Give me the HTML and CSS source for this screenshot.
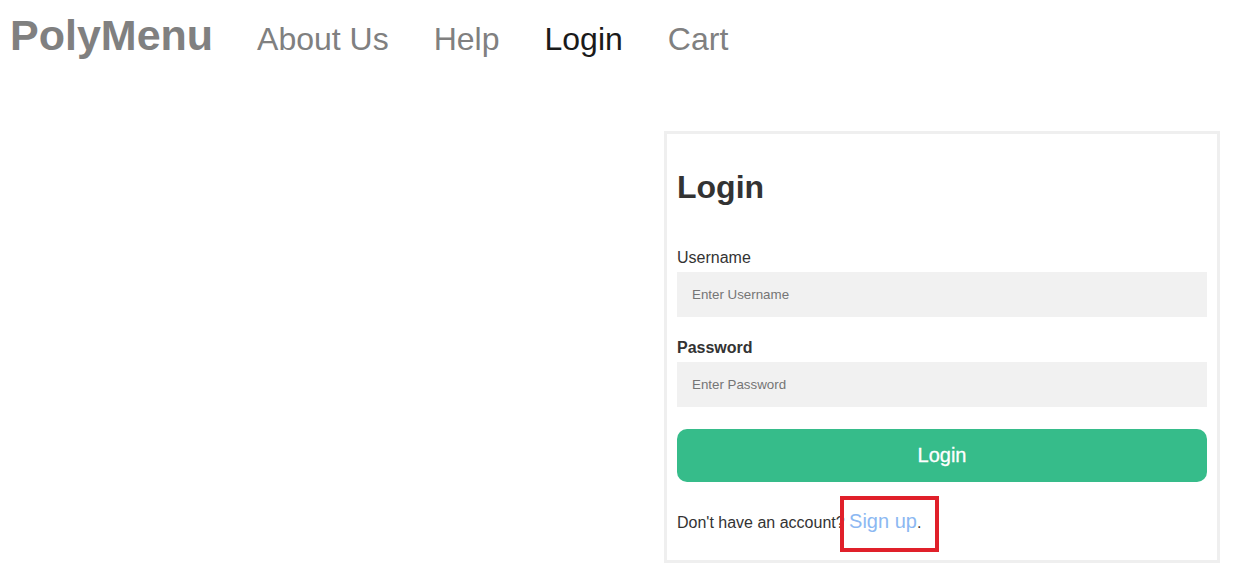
FILE: index.html
```html
<!DOCTYPE html>
<html lang="en">
<head>
<meta charset="utf-8">
<title>PolyMenu - Login</title>
<link rel="stylesheet" href="styles.css">
</head>
<body>
<header class="topbar">
  <a class="brand" href="#">PolyMenu</a>
  <nav class="nav">
    <a class="nav-link" href="#">About Us</a>
    <a class="nav-link" href="#">Help</a>
    <a class="nav-link nav-link--active" href="#">Login</a>
    <a class="nav-link" href="#">Cart</a>
  </nav>
</header>
<main class="layout">
  <div class="layout-spacer"></div>
  <form class="card">
    <h1 class="card-title">Login</h1>
    <label class="field-label">Username</label>
    <input class="field-input" type="text" placeholder="Enter Username">
    <label class="field-label field-label--bold">Password</label>
    <input class="field-input" type="password" placeholder="Enter Password">
    <button class="submit" type="button">Login</button>
    <p class="signup-line">Don't have an account? <span class="highlight"><a class="signup-link" href="#">Sign up</a>.</span></p>
  </form>
</main>
</body>
</html>
```

FILE: styles.css
```css
* {
  box-sizing: border-box;
}

body {
  margin: 8px;
  font-family: "Liberation Sans", Arial, sans-serif;
  color: #333;
  background: #fff;
}

.topbar {
  display: flex;
  align-items: baseline;
  padding-top: 4px;
  padding-left: 2px;
}

.brand {
  font-size: 43px;
  font-weight: bold;
  line-height: 47px;
  color: #808080;
  text-decoration: none;
  margin-right: 44px;
}

.nav {
  display: flex;
  align-items: baseline;
  gap: 45px;
}

.nav-link {
  font-size: 32px;
  color: #808080;
  text-decoration: none;
}

.nav-link--active {
  color: #1a1a1a;
}

.layout {
  display: grid;
  grid-template-columns: 1fr 556px;
  padding-top: 72px;
  padding-right: 9px;
}

.card {
  border: 3px solid #efefef;
  padding: 10px;
  margin: 0;
}

.card-title {
  font-size: 32px;
  font-weight: bold;
  color: #333;
  margin: 25px 0 43px;
  line-height: 37px;
}

.field-label {
  display: block;
  font-size: 16px;
  line-height: 18px;
  color: #333;
}

.field-label--bold {
  font-weight: bold;
}

.field-input {
  display: block;
  width: 100%;
  margin: 5px 0 22px;
  padding: 15px;
  border: none;
  background: #f1f1f1;
  font-family: "Liberation Sans", Arial, sans-serif;
  font-size: 13.333px;
  color: #333;
}

.field-input::placeholder {
  color: #757575;
}

.submit {
  display: block;
  width: 100%;
  height: 53px;
  padding: 0;
  border: none;
  border-radius: 10px;
  background: #36bc8a;
  color: #fff;
  font-family: "Liberation Sans", Arial, sans-serif;
  font-size: 20px;
  line-height: 23px;
  -webkit-text-stroke: 0.3px #fff;
}

.signup-line {
  font-size: 16px;
  line-height: 24px;
  color: #333;
  margin: 27px 0 15px;
}

.highlight {
  position: relative;
}

.highlight::after {
  content: "";
  position: absolute;
  top: -18px;
  bottom: -21px;
  left: -9px;
  right: -18px;
  border: 4px solid #e0202a;
  pointer-events: none;
}

.signup-link {
  font-size: 20px;
  color: #8cb8f2;
  text-decoration: none;
}
```
